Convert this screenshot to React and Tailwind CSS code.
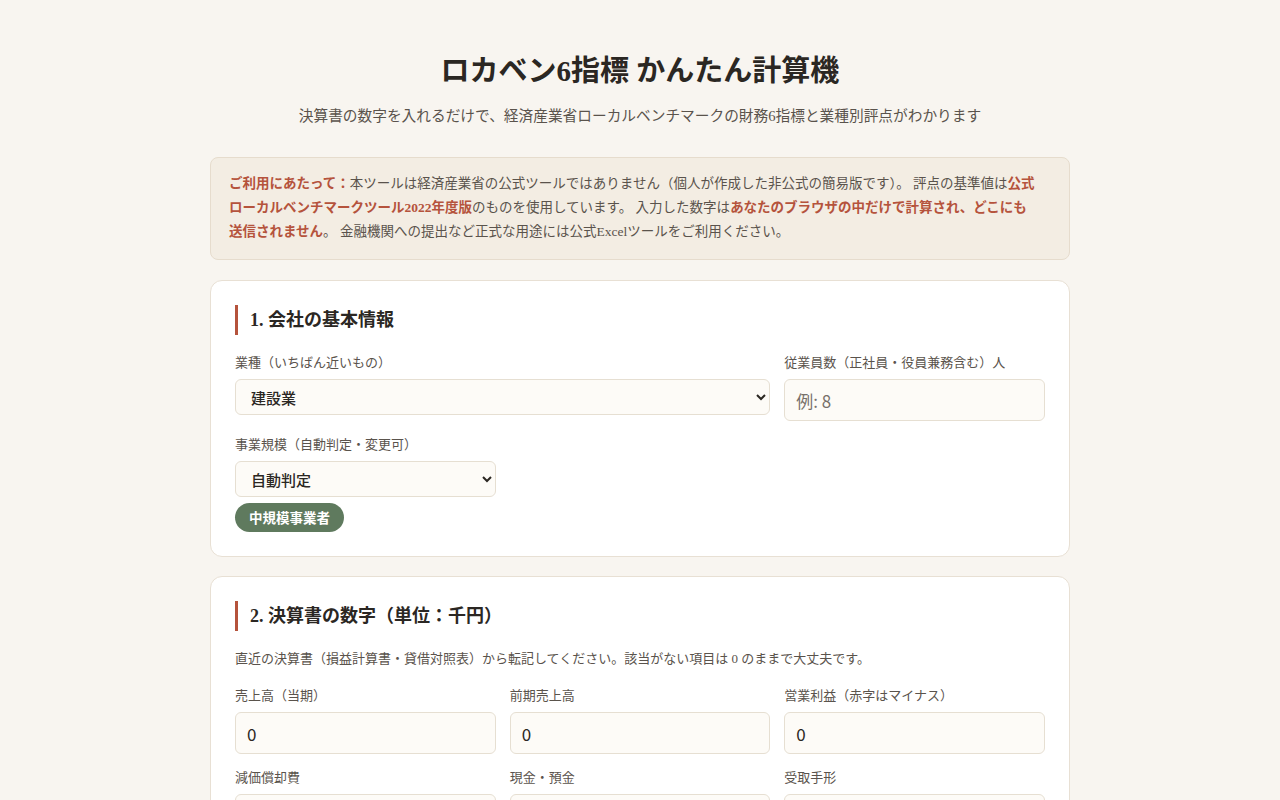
import React from 'react';

const serif = { fontFamily: '"Liberation Serif", "Noto Sans CJK JP", serif' };

function Field({ label, span, children }) {
  return (
    <div className={span ? 'col-span-2 flex flex-col' : 'flex flex-col'}>
      <label className="text-[13px] leading-[20px] text-[#5a534c] mb-[6px]">{label}</label>
      {children}
    </div>
  );
}

function Select({ value, options }) {
  return (
    <select
      defaultValue={value}
      className="w-full h-[36px] rounded-[6px] border border-[#e6dfd2] bg-[#fdfbf7] pl-[11px] pr-[6px] text-[15px] font-medium text-[#2b2723] font-['Noto_Sans_CJK_JP',sans-serif] outline-none"
    >
      {options.map((o) => (
        <option key={o}>{o}</option>
      ))}
    </select>
  );
}

function NumInput({ value, placeholder }) {
  return (
    <input
      type="text"
      defaultValue={value}
      placeholder={placeholder}
      className="w-full h-[42px] rounded-[6px] border border-[#e6dfd2] bg-[#fdfbf7] px-[11px] text-[17px] text-[#2b2723] placeholder:text-[#77706a] font-['Noto_Sans_CJK_JP',sans-serif] outline-none"
    />
  );
}

function SectionTitle({ children }) {
  return (
    <h2 className="border-l-[3px] border-[#b5533c] pl-[12px] text-[18px] leading-[30px] font-bold text-[#2b2723] mb-[18px]">
      {children}
    </h2>
  );
}

export default function App() {
  const financeFields = [
    '売上高（当期）',
    '前期売上高',
    '営業利益（赤字はマイナス）',
    '減価償却費',
    '現金・預金',
    '受取手形',
  ];

  return (
    <div className="min-h-screen bg-[#f8f5f0] text-[#2b2723]" style={serif}>
      <div className="mx-auto w-[860px] pt-[50px] pb-[40px]">
        {/* Header */}
        <header className="text-center">
          <h1 className="text-[29px] leading-[42px] font-bold text-[#2b2723]">ロカベン6指標 かんたん計算機</h1>
          <p className="mt-[14px] text-[14.7px] leading-[20px] text-[#5a534c]">
            決算書の数字を入れるだけで、経済産業省ローカルベンチマークの財務6指標と業種別評点がわかります
          </p>
        </header>

        {/* Notice */}
        <div className="mt-[31px] rounded-[8px] border border-[#e6dccd] bg-[#f3ede3] px-[18px] pt-[14px] pb-[15px] text-[13.5px] leading-[24px] text-[#5a534c]">
          <strong className="text-[#b5533c]">ご利用にあたって：</strong>
          本ツールは経済産業省の公式ツールではありません（個人が作成した非公式の簡易版です）。 評点の基準値は
          <strong className="text-[#b5533c]">
            公式<br />ローカルベンチマークツール2022年度版
          </strong>
          のものを使用しています。 入力した数字は
          <strong className="text-[#b5533c]">
            あなたのブラウザの中だけで計算され、どこにも<br />送信されません
          </strong>
          。 金融機関への提出など正式な用途には公式Excelツールをご利用ください。
        </div>

        {/* Section 1 */}
        <section className="mt-[20px] rounded-[12px] border border-[#e8e0d4] bg-white px-[24px] pt-[24px] pb-[24px]">
          <SectionTitle>1. 会社の基本情報</SectionTitle>
          <div className="grid grid-cols-3 gap-x-[14px] gap-y-[14px]">
            <Field label="業種（いちばん近いもの）" span>
              <Select value="建設業" options={['建設業', '製造業', '卸売業', '小売業', 'サービス業']} />
            </Field>
            <Field label="従業員数（正社員・役員兼務含む）人">
              <NumInput placeholder="例: 8" />
            </Field>
            <Field label="事業規模（自動判定・変更可）">
              <Select value="自動判定" options={['自動判定', '小規模事業者', '中規模事業者']} />
              <div className="mt-[6px]">
                <span className="inline-block rounded-full bg-[#5f7a5e] px-[14px] py-[4px] text-[13.5px] leading-[21px] font-bold text-white font-['Noto_Sans_CJK_JP',sans-serif]">
                  中規模事業者
                </span>
              </div>
            </Field>
          </div>
        </section>

        {/* Section 2 */}
        <section className="mt-[19px] rounded-[12px] border border-[#e8e0d4] bg-white px-[24px] pt-[24px] pb-[24px]">
          <SectionTitle>2. 決算書の数字（単位：千円）</SectionTitle>
          <p className="text-[13px] leading-[20px] text-[#5a534c] mb-[17px]">
            直近の決算書（損益計算書・貸借対照表）から転記してください。該当がない項目は 0 のままで大丈夫です。
          </p>
          <div className="grid grid-cols-3 gap-x-[14px] gap-y-[14px]">
            {financeFields.map((f) => (
              <Field key={f} label={f}>
                <NumInput value="0" />
              </Field>
            ))}
          </div>
        </section>
      </div>
    </div>
  );
}
